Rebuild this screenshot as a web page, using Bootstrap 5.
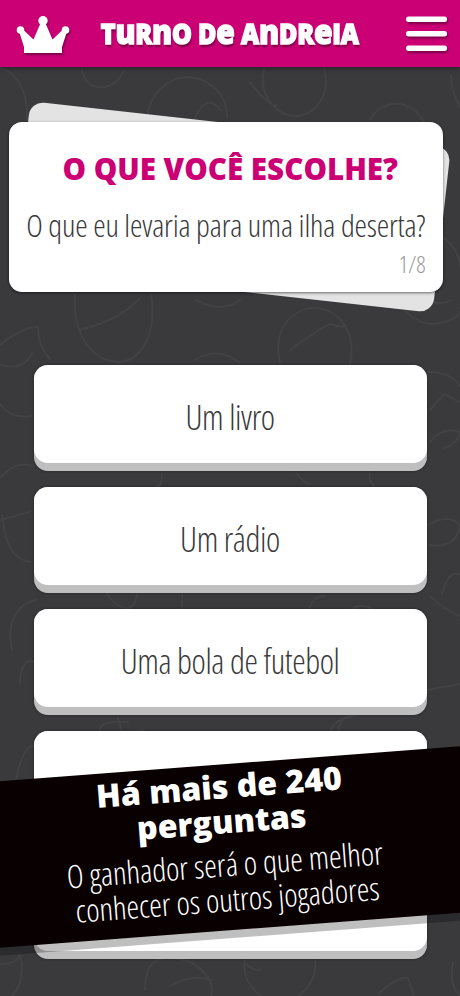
<!DOCTYPE html>
<html lang="pt-BR">
<head>
<meta charset="utf-8">
<meta name="viewport" content="width=device-width, initial-scale=1">
<title>Turno de Andreia</title>
<link href="https://cdn.jsdelivr.net/npm/bootstrap@5.3.0/dist/css/bootstrap.min.css" rel="stylesheet">
<style>
  :root { --pink: #cb0075; --ink: #3a3a3c; }
  body { font-family: "Open Sans", "Noto Sans", sans-serif; background: var(--ink); color: var(--ink); }
  .game { height: 996px; }
  .doodles { z-index: 0; fill: none; stroke: #424245; stroke-width: 2; stroke-linecap: round; }
  .topbar { height: 66.5px; background: var(--pink); box-shadow: 0 1px 5px rgba(0,0,0,.45); z-index: 2; padding: 1px 13px 0 15px; }
  .soft-shadow { filter: drop-shadow(1px 2px 1px rgba(70,0,40,.6)); }
  .turn-title { font-size: 27.5px; line-height: 40px; font-weight: 800; color: #fff; white-space: nowrap; letter-spacing: -.2px; -webkit-text-stroke: 1.4px #fff; text-shadow: 1px 3px 2px rgba(70,0,40,.6); transform: scaleX(.91); margin: 0 0 0 -18px; }
  .turn-title span { text-transform: lowercase; font-size: 1.2em; line-height: 1; }
  .deck { margin: 55.5px 17px 0 8.5px; height: 169.5px; }
  .deck-back { width: 423px; height: 165.5px; left: 11.3px; top: 1.8px; border-radius: 14px; background: #e3e3e3; transform: rotate(6.3deg); }
  .deck-front { border-radius: 13px; background: #fff; box-shadow: 0 1px 3px rgba(0,0,0,.55); padding: 27px 17.5px 0 17.5px; }
  .prompt-title { font-size: 29.6px; line-height: 40px; font-weight: 800; color: var(--pink); white-space: nowrap; padding-left: 9px; }
  .thin { font-weight: 300; font-stretch: 75%; white-space: nowrap; }
  .question { font-size: 31.5px; line-height: 42px; margin-top: 15px; letter-spacing: -.18px; }
  .counter { font-size: 23px; line-height: 30px; color: #999; margin-top: 3px; }
  .answers { margin: 73.5px 33.5px 0; gap: 16.5px; }
  .answer { height: 105.5px; padding: 0 0 7.5px; border: 0; border-radius: 14px; background: #bfbfbf; box-shadow: 0 0 3px rgba(0,0,0,.4); color: var(--ink); font-size: 34px; line-height: 40px; letter-spacing: -.4px; }
  .answer-face { background: #fff; border-radius: 14px; height: 98px; padding-top: 5px; }
  .ribbon { left: -20px; right: -20px; top: 763.5px; height: 165.5px; background: #090001; color: #fff; transform: rotate(-4.35deg); box-shadow: 0 8px 0 rgba(0,0,0,.25); z-index: 3; padding: 3.5px 13px 0 0; }
  .ribbon-title { font-size: 32.2px; line-height: 35.5px; font-weight: 800; width: 300px; }
  .ribbon-text { font-size: 31.8px; line-height: 35px; margin-top: 7px; }
</style>
</head>
<body>
<div class="game position-relative overflow-hidden">
  <svg class="doodles position-absolute top-0 start-0" width="460" height="996" viewBox="0 0 460 996" aria-hidden="true">
    <g id="faces">
      <path d="M0 68c20 5 30 30 26 58M82 70c4 24 34 22 42 0M147 122c0-36 36-56 62-38 14 8 18 22 18 34M195 118q12-26 26-8M264 70c-6 26 14 48 34 46 24-4 32-28 26-48M250 82q14 20 26 24M370 120c10-20 40-24 54 2M451 75c0 14 4 24 9 32"/>
      <path d="M75 295c-4 50 30 76 56 64 20-12 24-40 20-64M80 330q40-10 60-32M0 345q22-18 38-18q0 20 12 32M196 300q26 14 44 0M280 362c-8-34 14-56 38-54 26 4 38 30 32 56M290 350q30-22 40-26q10 4 16 2M195 360q22-14 44 2M400 300q8 22 32 24q22-2 28-12M415 290q20 20 36 10M440 235q20 14 20 32"/>
      <path d="M0 404q12 16 32 12M0 365q24 6 32-12M427 372q24 0 33 14M430 410l14-16 16 8M430 442q12-16 30-10q-2 12-16 16M0 478q16-18 32-12M162 474q0 14-6 12M296 472q8 12 14 12M370 472q-2 8 4 14"/>
      <path d="M0 520l30-8M2 516c4 30 10 42 28 46M428 525q20-12 32 0q-4 24-30 20M12 650c-6-30 6-46 24-50M20 684c0-16 6-26 14-22M428 690l32-6M430 596q14 14 30 20M442 594q6-24 18-20M107 594q8 12 18 14t12-14M182 594v14M310 608q2-12 16-12M350 610q12-8 24 0M118 718l4 14 22-2M338 732q2-18 18-16"/>
      <path d="M16 778q8-34 18-32M0 964q18 0 20-10q6 28-8 42M145 990c0-26 10-34 30-32 28 4 40 24 36 38M170 986q20-12 42-6M245 960c-4 30 24 46 44 40 20-6 28-26 26-40M246 964q10 8 14 6M378 994q20-18 30-16l6 18M453 962q-4 24 7 34M330 732q4-14 26-16M100 732q-2-12 28-10"/>
    </g>
  </svg>

  <header class="topbar position-relative d-flex align-items-center justify-content-between">
    <svg class="soft-shadow" width="56" height="42" viewBox="0 0 56 42" fill="#fff" role="img" aria-label="Coroa">
      <path d="M9 40V34L4 18.500l3-3L18.500 26.500 26 9h4L37.500 26.500 49 15.500l3 3L47 34v6z"/>
      <circle cx="28" cy="7.800" r="4.700"/><circle cx="5.500" cy="17" r="3.800"/><circle cx="50.500" cy="17" r="3.800"/>
    </svg>
    <h1 class="turn-title text-center">T<span>u</span>R<span>n</span>O D<span>e</span> A<span>n</span>DR<span>e</span>IA</h1>
    <button class="btn p-0 border-0 d-flex soft-shadow" type="button" aria-label="Menu">
      <svg width="41" height="38" viewBox="0 0 41 38" fill="#fff"><rect width="41" height="5.500" y="1.500" rx="2.500"/><rect y="16" width="41" height="5.500" rx="2.500"/><rect y="30.500" width="41" height="5.500" rx="2.500"/></svg>
    </button>
  </header>

  <main>
    <section class="deck position-relative">
      <div class="deck-back position-absolute"></div>
      <div class="deck-front position-relative h-100 text-center">
        <h2 class="prompt-title m-0">O QUE VOCÊ ESCOLHE?</h2>
        <p class="question thin mb-0">O que eu levaria para uma ilha deserta?</p>
        <p class="counter thin mb-0 text-end">1/8</p>
      </div>
    </section>
    <section class="answers position-relative d-flex flex-column">
      <button class="answer w-100" type="button"><span class="answer-face thin d-flex align-items-center justify-content-center">Um livro</span></button>
      <button class="answer w-100" type="button"><span class="answer-face thin d-flex align-items-center justify-content-center">Um rádio</span></button>
      <button class="answer w-100" type="button"><span class="answer-face thin d-flex align-items-center justify-content-center">Uma bola de futebol</span></button>
      <button class="answer w-100" type="button" aria-label="Opção 4"><span class="answer-face d-block"></span></button>
      <button class="answer w-100" type="button" aria-label="Opção 5"><span class="answer-face d-block"></span></button>
    </section>
  </main>

  <aside class="ribbon position-absolute text-center">
    <h2 class="ribbon-title mx-auto mb-0">Há mais de 240 perguntas</h2>
    <p class="ribbon-text thin mb-0">O ganhador será o que melhor<br>conhecer os outros jogadores</p>
  </aside>
</div>
<script src="https://cdn.jsdelivr.net/npm/bootstrap@5.3.0/dist/js/bootstrap.bundle.min.js"></script>
</body>
</html>
